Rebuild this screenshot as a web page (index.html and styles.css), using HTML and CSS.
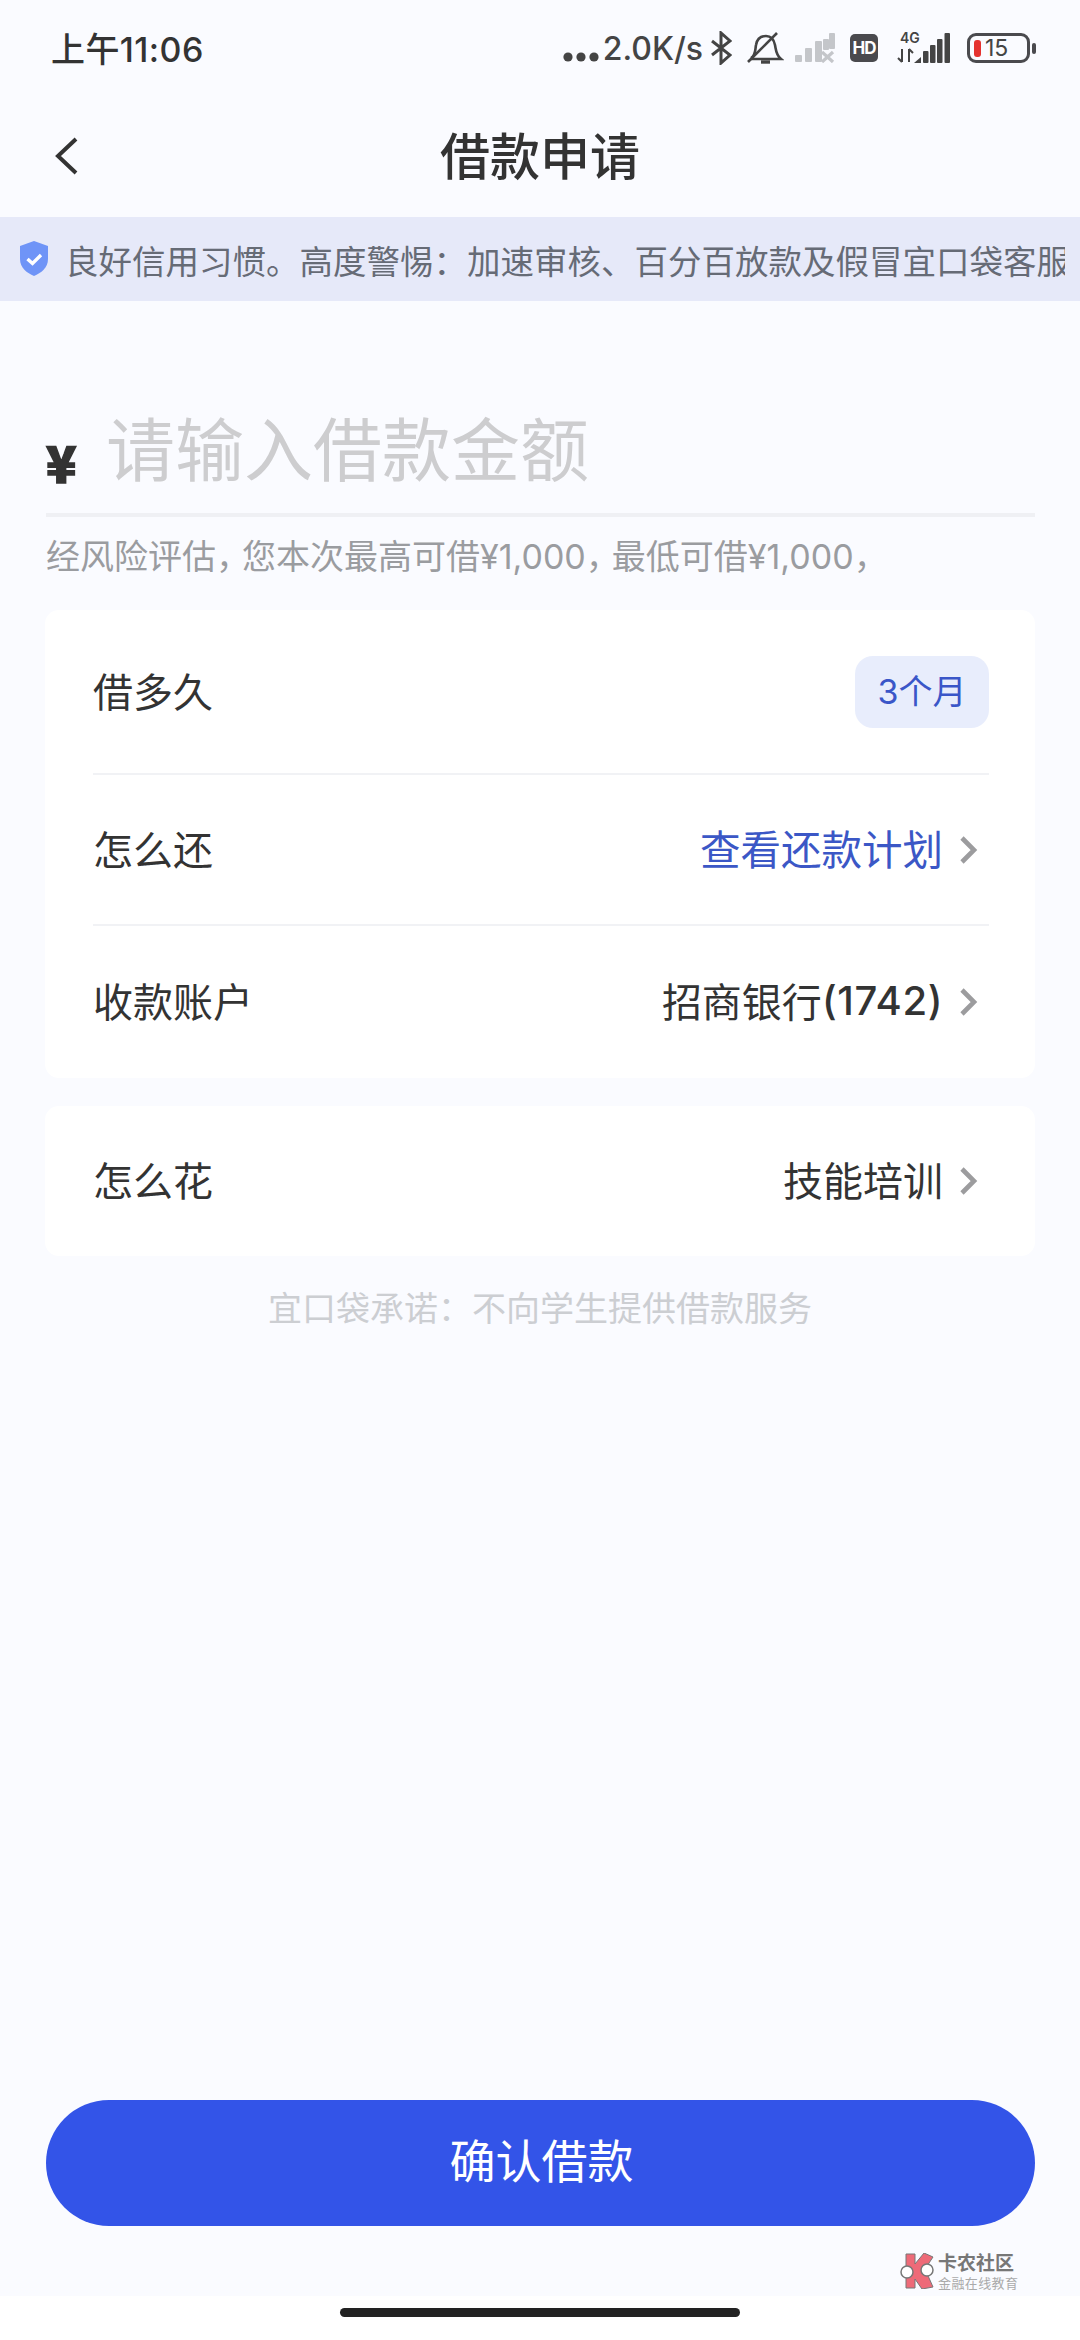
FILE: index.html
```html
<!DOCTYPE html>
<html lang="zh-CN">
<head>
	<meta charset="UTF-8">
	<title>借款申请</title>
	<link rel="stylesheet" href="styles.css">
</head>
<body>
	<div class="page">
		<div class="status">
			<span class="time">上午11:06</span>
			<div class="status-icons">
				<svg class="ic-dots" width="36" height="14" viewBox="0 0 36 14"><circle cx="5" cy="7" r="4.6"/><circle cx="18" cy="7" r="4.6"/><circle cx="31" cy="7" r="4.6"/></svg>
				<span class="speed">2.0K/s</span>
				<svg class="ic-bt" width="22" height="34" viewBox="0 0 22 34"><path d="M2 10 L20 24 L11 32 V2 L20 10 L2 24"/></svg>
				<svg class="ic-bell" width="38" height="32" viewBox="0 0 38 32"><path d="M5 26 C10 23 9 18 10 13 C11 7 15 4 20 4 C25 4 28 8 29 13 C30 18 30 23 35 27 H5"/><path d="M2 30 L31 1"/><path d="M15 30 H24" class="thick"/></svg>
				<svg class="ic-signal" width="40" height="30" viewBox="0 0 40 30"><rect x="0" y="22" width="7" height="7" rx="1"/><rect x="10" y="15" width="7" height="14" rx="1"/><rect x="20" y="8" width="7" height="21" rx="1"/><rect x="28" y="6" width="6" height="11" rx="1"/><rect x="34" y="0" width="6" height="16" rx="1"/><path d="M27 19 L38 29 M38 19 L27 29"/></svg>
				<div class="hd">HD</div>
				<svg class="ic-4g" width="56" height="32" viewBox="0 0 56 32"><text x="4" y="11" class="g-text">4G</text><path d="M6 17 V30 M2 26 L6 30 M13 30 V17 M13 17 L17 21" class="arrows"/><path d="M18 31 L25 25 V31 Z"/><rect x="27" y="19" width="5.5" height="12" rx="1"/><rect x="34" y="13" width="5.5" height="18" rx="1"/><rect x="41" y="7" width="5.5" height="24" rx="1"/><rect x="48.5" y="1" width="5.5" height="30" rx="1"/></svg>
				<div class="battery">
					<div class="battery-box"><i class="battery-level"></i><span>15</span></div>
					<i class="battery-nub"></i>
				</div>
			</div>
		</div>

		<div class="nav">
			<svg class="back" width="24" height="40" viewBox="0 0 24 40"><path d="M21 3 L3 20 L21 37"/></svg>
			<h1>借款申请</h1>
		</div>

		<div class="notice">
			<svg width="30" height="36" viewBox="0 0 30 36"><path d="M15 0 L29 5 V18 C29 27 22 32 15 35 C8 32 1 27 1 18 V5 Z" fill="#6f94f7"/><path d="M8.5 18 L13.5 22.5 L22 14" fill="none" stroke="#fff" stroke-width="3.4"/></svg>
			<div class="notice-text">良好信用习惯。高度警惕&#xFF1A;加速审核、百分百放款及假冒宜口袋客服</div>
		</div>

		<div class="main">
			<div class="amount">
				<span class="yen">¥</span>
				<span class="placeholder">请输入借款金额</span>
			</div>
			<div class="hint">经风险评估<span class="comma">&#xFF0C;</span>您本次最高可借¥1,000<span class="comma">&#xFF0C;</span>最低可借¥1,000<span class="comma">&#xFF0C;</span></div>

			<div class="card">
				<div class="row row-first">
					<span>借多久</span>
					<span class="tag">3个月</span>
				</div>
				<div class="row row-mid">
					<span>怎么还</span>
					<span class="val link">查看还款计划<svg class="chev" width="22" height="32" viewBox="0 0 22 32"><path d="M4 4 L16 16 L4 28"/></svg></span>
				</div>
				<div class="row row-last">
					<span>收款账户</span>
					<span class="val">招商银行<span class="num">(1742)</span><svg class="chev" width="22" height="32" viewBox="0 0 22 32"><path d="M4 4 L16 16 L4 28"/></svg></span>
				</div>
			</div>

			<div class="card card-second">
				<div class="row row-single">
					<span>怎么花</span>
					<span class="val">技能培训<svg class="chev" width="22" height="32" viewBox="0 0 22 32"><path d="M4 4 L16 16 L4 28"/></svg></span>
				</div>
			</div>

			<div class="promise">宜口袋承诺&#xFF1A;不向学生提供借款服务</div>
		</div>

		<div class="btn">确认借款</div>
	</div>

	<div class="footer"><i class="home-bar"></i></div>

	<div class="mark">
		<svg width="36" height="36" viewBox="0 0 36 36">
			<path d="M6 1 H15 V11 L24 0 L33 4 L25 16 L33 34 L22 36 L15 26 V35 H6 Z" fill="#ee6a78" stroke="#777" stroke-width="1"/>
			<circle cx="7" cy="19" r="6" fill="#fff" stroke="#777" stroke-width="1.5"/>
			<circle cx="27" cy="17" r="6" fill="#fff" stroke="#777" stroke-width="1.5"/>
		</svg>
		<div class="mark-text">
			<b>卡农社区</b>
			<span>金融在线教育</span>
		</div>
	</div>
</body>
</html>
```

FILE: styles.css
```css
* { margin: 0; padding: 0; box-sizing: border-box; }

body {
	width: 1080px;
	height: 2340px;
	background: #fff;
	font-family: "Inter", "Noto Sans CJK SC", sans-serif;
	color: #333;
	position: relative;
	overflow: hidden;
	display: flex;
	flex-direction: column;
}

.page {
	flex: 1;
	display: flex;
	flex-direction: column;
	background: #fafbff;
}

/* status bar */
.status {
	height: 96px;
	padding: 0 44px 0 51px;
	display: flex;
	align-items: center;
	justify-content: space-between;
}
.time { font-size: 34px; font-weight: 500; letter-spacing: 0.4px; margin-bottom: 1px; }
.status-icons { display: flex; align-items: center; }
.speed { font-size: 32px; font-weight: 500; margin: 0 7px 0 4px; color: #444; flex: none; }
.ic-dots { fill: #444; margin-top: 18px; }
.ic-bt path { fill: none; stroke: #444; stroke-width: 3; }
.ic-bell { margin-left: 14px; }
.ic-bell path { fill: none; stroke: #444; stroke-width: 2.6; }
.ic-bell .thick { stroke-width: 3.4; }
.ic-signal { margin-left: 11px; fill: #c4c6ca; }
.ic-signal path { stroke: #c4c6ca; stroke-width: 3.2; fill: none; }
.hd {
	width: 28px;
	height: 28px;
	margin-left: 15px;
	background: #4a4a4e;
	border-radius: 5px;
	color: #fff;
	font-size: 17px;
	font-weight: 700;
	line-height: 28px;
	text-align: center;
	letter-spacing: -1px;
}
.ic-4g { margin-left: 18px; fill: #444; }
.ic-4g .g-text { font-size: 14px; font-weight: 600; font-family: "Inter", sans-serif; }
.ic-4g .arrows { fill: none; stroke: #444; stroke-width: 2; }
.battery { display: flex; align-items: center; margin-left: 15px; }
.battery-box {
	width: 63px;
	height: 30px;
	border: 3.5px solid #4a4a4e;
	border-radius: 9px;
	display: flex;
	align-items: center;
	padding-left: 4px;
	font-size: 23px;
	line-height: 23px;
	color: #444;
}
.battery-level {
	width: 7px;
	height: 17px;
	background: #e5322f;
	border-radius: 3px;
	margin-right: 4px;
}
.battery-nub {
	width: 4px;
	height: 11px;
	background: #4a4a4e;
	border-radius: 2px;
	margin-left: 2px;
}

/* nav */
.nav {
	height: 121px;
	position: relative;
	display: flex;
	align-items: center;
	justify-content: center;
}
.back { position: absolute; left: 55px; top: 40px; }
.back path { fill: none; stroke: #333; stroke-width: 4; }
.nav h1 { font-size: 50px; font-weight: 500; line-height: 70px; }

/* notice */
.notice {
	height: 84px;
	background: #e6e9f9;
	display: flex;
	align-items: center;
	padding-left: 19px;
}
.notice svg { flex: none; margin-right: 16px; }
.notice-text {
	width: 1000px;
	overflow: hidden;
	white-space: nowrap;
	font-size: 33.5px;
	color: #666b76;
}

/* main */
.main { flex: 1; padding: 0 45px; }
.amount {
	height: 216px;
	margin: 0 0 0 1px;
	padding-bottom: 17px;
	border-bottom: 4px solid #eff0f4;
	display: flex;
	align-items: flex-end;
}
.yen {
	font-family: "Noto Sans CJK SC", sans-serif;
	font-size: 50px;
	font-weight: 900;
	line-height: 70px;
	width: 60px;
	-webkit-text-stroke: 1.5px #333;
}
.placeholder { font-size: 69px; line-height: 90px; color: #cdcdcf; }
.hint {
	height: 93px;
	padding: 14px 1px 0;
	font-size: 34px;
	line-height: 52px;
	color: #9a9ca0;
	white-space: nowrap;
}
.comma { letter-spacing: -8px; }

.card { background: #fff; border-radius: 14px; padding: 0 46px 0 48px; }
.card-second { margin-top: 28px; }
.row {
	display: flex;
	align-items: center;
	justify-content: space-between;
	font-size: 40px;
	color: #333;
	padding-bottom: 4px;
}
.row-first { height: 165px; border-bottom: 2px solid #f1f2f5; }
.row-mid { height: 151px; border-bottom: 2px solid #f1f2f5; }
.row-last { height: 152px; }
.row-single { height: 150px; }
.tag {
	width: 134px;
	height: 72px;
	margin-top: 4px;
	background: #e8edfc;
	border-radius: 18px;
	font-size: 34px;
	line-height: 72px;
	text-align: center;
	color: #3a56c8;
}
.val { display: flex; align-items: center; }
.num { font-weight: 500; letter-spacing: 0.6px; }
.link { color: #3b57c6; font-size: 40.5px; }
.chev { margin: 4px 9px 0 15px; flex: none; }
.chev path { fill: none; stroke: #9c9c9e; stroke-width: 4.6; }

.promise {
	margin-top: 33px;
	font-size: 34px;
	line-height: 40px;
	text-align: center;
	color: #ccced2;
}

.btn {
	height: 126px;
	margin: 0 45px 70px 46px;
	background: #3354e8;
	border-radius: 63px;
	color: #fff;
	font-size: 46px;
	font-weight: 400;
	line-height: 122px;
	text-align: center;
	padding-left: 2px;
}

.footer { height: 44px; display: flex; justify-content: center; padding-top: 12px; }
.home-bar { width: 400px; height: 9px; background: #222; border-radius: 5px; }

/* watermark */
.mark {
	position: absolute;
	left: 900px;
	top: 2251px;
	display: flex;
	align-items: center;
	gap: 2px;
}
.mark-text { display: flex; flex-direction: column; gap: 2px; font-family: "Noto Sans CJK SC", sans-serif; }
.mark-text b { font-size: 19px; line-height: 22px; color: #777; }
.mark-text span { font-size: 13px; line-height: 16px; letter-spacing: 0.4px; color: #aaa; }
```
